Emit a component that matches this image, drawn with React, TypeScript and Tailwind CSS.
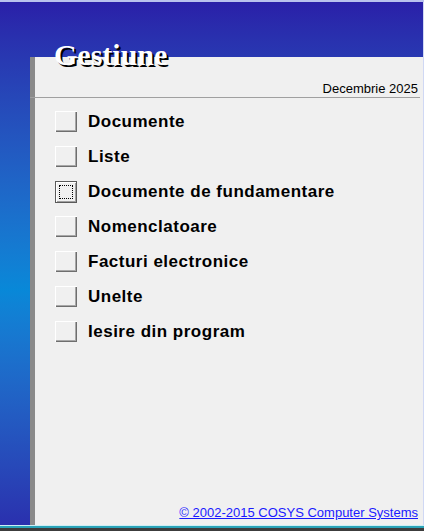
// Fereastra principala "Gestiune"

const items = [
  "Documente",
  "Liste",
  "Documente de fundamentare",
  "Nomenclatoare",
  "Facturi electronice",
  "Unelte",
  "Iesire din program",
];

function MenuButton({ focused }: { focused?: boolean }) {
  if (focused) {
    return (
      <div className="h-[22px] w-[22px] border border-[#5a5a5a] bg-[#f0f0f0] p-[3px] shadow-[inset_1px_1px_0_#fff,inset_-1px_-1px_0_#a0a0a0]">
        <div className="h-full w-full border border-dotted border-black" />
      </div>
    );
  }
  return (
    <div className="h-[21px] w-[22px] bg-[#f0f0f0] shadow-[inset_1px_1px_0_#fff,inset_-1px_-1px_0_#6e6e6e,inset_-2px_-2px_0_#a8a8a8]" />
  );
}

export default function App() {
  return (
    <div className="flex h-[531px] w-[424px] flex-col overflow-hidden font-['Liberation_Sans',Arial,sans-serif]">
      <div className="h-[2px] bg-[#b9c1ee]" />

      <div className="relative flex flex-1 flex-col border-r border-[#d0d8f4] bg-linear-to-b from-[#2a1fa8] via-[#0888d8] via-55% to-[#2a30ae] pl-[30px] pt-[55px]">
        {/* titlu */}
        <h1 className="absolute left-[54px] top-[38px] z-10 font-['Liberation_Serif','Times_New_Roman',serif] text-[30px] font-bold leading-none text-white [text-shadow:2px_2px_0_#000]">
          Gestiune
        </h1>

        <div className="flex flex-1 flex-col border-l-[5px] border-[#8a8a8a] bg-[#f0f0f0]">
          <div className="flex h-[40px] items-end justify-end pb-[1px] pr-[5px] text-[13px] leading-[15px] text-black">
            Decembrie 2025
          </div>
          <div className="-ml-[5px] mr-[3px] h-px bg-[#a0a0a0]" />

          {/* meniu */}
          <div className="flex flex-col pl-[20px] pt-[6px]">
            {items.map((label, i) => (
              <div key={label} className="flex h-[35px] items-center gap-[11px]">
                <MenuButton focused={i === 2} />
                <span className="text-[17px] font-bold tracking-[0.5px] text-black">{label}</span>
              </div>
            ))}
          </div>

          <div className="flex-1" />

          <div className="flex justify-end pb-[5px] pr-[5px]">
            <a href="#" className="text-[13px] leading-[15px] text-[#1a1aff] underline">
              © 2002-2015 COSYS Computer Systems
            </a>
          </div>
        </div>
      </div>

      <div className="h-px bg-[#cdeef5]" />
      <div className="h-[2px] bg-[#2aa3b8]" />
      <div className="h-[3px] bg-[#3c3c3c]" />
    </div>
  );
}
